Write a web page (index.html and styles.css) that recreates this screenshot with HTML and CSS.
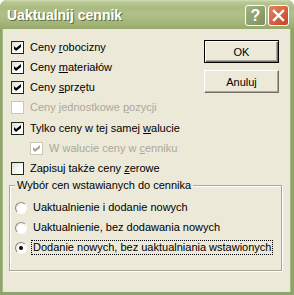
FILE: index.html
```html
<!DOCTYPE html>
<html lang="pl">
<head>
    <meta charset="UTF-8">
    <title>Uaktualnij cennik</title>
    <link rel="stylesheet" href="styles.css">
</head>
<body>
    <div class="window">
        <div class="titlebar">
            <span class="title">Uaktualnij cennik</span>
            <div class="caption-btns">
                <span class="cap-btn help">?</span>
                <span class="cap-btn close">
                    <svg width="13" height="13" viewBox="0 0 13 13">
                        <path d="M2 2 L11 11 M11 2 L2 11" stroke="#fff" stroke-width="2.4" stroke-linecap="square"/>
                    </svg>
                </span>
            </div>
        </div>

        <div class="client">
            <div class="top">
                <!-- pola wyboru -->
                <div class="checks">
                    <label class="check"><span class="box on"></span><span>Ceny <u>r</u>obocizny</span></label>
                    <label class="check"><span class="box on"></span><span>Ceny <u>m</u>ateriałów</span></label>
                    <label class="check"><span class="box on"></span><span>Ceny <u>s</u>przętu</span></label>
                    <label class="check disabled"><span class="box"></span><span>Ceny jednostkowe <u>p</u>ozycji</span></label>
                    <label class="check gap"><span class="box on"></span><span>Tylko ceny w tej samej <u>w</u>alucie</span></label>
                    <label class="check disabled indent"><span class="box on"></span><span>W walucie ceny w <u>c</u>enniku</span></label>
                    <label class="check"><span class="box"></span><span>Zapisuj także ceny <u>z</u>erowe</span></label>
                </div>

                <div class="buttons">
                    <button class="btn default">OK</button>
                    <button class="btn">Anuluj</button>
                </div>
            </div>

            <!-- grupa opcji -->
            <div class="group">
                <span class="group-title">Wybór cen wstawianych do cennika</span>
                <label class="radio"><span class="dot"></span><span class="radio-text">Uaktualnienie i dodanie nowych</span></label>
                <label class="radio"><span class="dot"></span><span class="radio-text">Uaktualnienie, bez dodawania nowych</span></label>
                <label class="radio"><span class="dot on"></span><span class="radio-text focus">Dodanie nowych, bez uaktualniania wstawionych</span></label>
            </div>
        </div>
    </div>
</body>
</html>
```

FILE: styles.css
```css
body {
    margin: 0;
    background: #fff;
    font-family: "Liberation Sans", Arial, sans-serif;
    font-size: 11px;
    color: #000;
}

.window {
    width: 294px;
    height: 295px;
    box-sizing: border-box;
    border-radius: 7px 7px 0 0;
    background: #8FA36C;
    overflow: hidden;
    display: flex;
    flex-direction: column;
}

.titlebar {
    height: 29px;
    flex: none;
    display: flex;
    align-items: center;
    justify-content: space-between;
    padding: 0 5px 0 7px;
    background: linear-gradient(to bottom, #D3DDB6 0px, #B9C893 2px, #AABB81 8px, #B0C08A 14px, #A5B67B 22px, #97AA6D 29px);
}

.title {
    color: #fff;
    font-weight: bold;
    font-size: 14px;
    text-shadow: 1px 1px 0 #5E6E3E;
    padding-top: 1px;
}

.caption-btns {
    display: flex;
    gap: 2px;
    padding-top: 2px;
}

.cap-btn {
    width: 21px;
    height: 21px;
    box-sizing: border-box;
    border: 1px solid #fff;
    border-radius: 3px;
    display: flex;
    align-items: center;
    justify-content: center;
    color: #fff;
}

.help {
    background: linear-gradient(135deg, #A3B383, #7C8F5C);
    font-weight: bold;
    font-size: 16px;
}

.close {
    background: linear-gradient(135deg, #E7835F, #C84126);
}

.client {
    flex: 1;
    margin: 0 4px 3px 3px;
    background: #ECE9D8;
    box-shadow: -1px 0 0 #A6B985, 1px 0 0 #A6B985;
}

.top {
    display: flex;
    justify-content: space-between;
    padding: 11px 11px 0 8px;
}

.checks {
    margin-top: 1px;
}

.check {
    display: flex;
    align-items: center;
    gap: 6px;
    height: 13px;
    margin-bottom: 7px;
    line-height: 13px;
}

.check.gap {
    margin-top: 8px;
}

.check.indent {
    margin-left: 19px;
}

.box {
    width: 13px;
    height: 13px;
    box-sizing: border-box;
    border: 1px solid #1F2A14;
    background: linear-gradient(135deg, #DCDCD4, #fff 70%);
    flex: none;
    position: relative;
}

.box.on::after {
    content: "";
    position: absolute;
    left: 2px;
    top: 2px;
    width: 7px;
    height: 7px;
    background: #000;
    clip-path: polygon(0 29%, 29% 57%, 100% 0, 100% 43%, 29% 100%, 0 71%);
}

.disabled {
    color: #ACA899;
}

.disabled .box {
    border-color: #CAC8BB;
    background: #fff;
}

.disabled .box.on::after {
    background: #ACA899;
}

.buttons {
    display: flex;
    flex-direction: column;
    gap: 7px;
}

.btn {
    width: 75px;
    height: 23px;
    font-family: inherit;
    font-size: 11px;
    background: #ECE9D8;
    border: 1px solid;
    border-color: #fff #716F64 #716F64 #fff;
    box-shadow: inset -1px -1px 0 #ACA899;
    padding: 0;
}

.btn.default {
    border-color: #000;
    box-shadow: inset 1px 1px 0 #fff, inset -1px -1px 0 #716F64, inset -2px -2px 0 #ACA899;
}

.group {
    position: relative;
    margin: 3px 0 0 6px;
    width: 273px;
    height: 86px;
    box-sizing: border-box;
    border: 1px solid #ACA899;
    box-shadow: 1px 1px 0 #fff, inset 1px 1px 0 #fff;
    padding: 15px 0 0 5px;
}

.group-title {
    position: absolute;
    left: 5px;
    top: -7px;
    padding: 0 2px;
    background: #ECE9D8;
    line-height: 13px;
}

.radio {
    display: flex;
    align-items: center;
    gap: 5px;
    height: 13px;
    margin-bottom: 7px;
    line-height: 13px;
}

.dot {
    width: 12px;
    height: 12px;
    box-sizing: border-box;
    border-radius: 50%;
    border: 1px solid;
    border-color: #8E8C80 #fff #fff #8E8C80;
    background: radial-gradient(circle at 60% 60%, #fff 40%, #E2E0D4);
    flex: none;
    position: relative;
}

.dot.on::after {
    content: "";
    position: absolute;
    left: 3px;
    top: 3px;
    width: 4px;
    height: 4px;
    border-radius: 50%;
    background: #000;
}

.radio-text {
    padding: 0 1px;
}

.radio-text.focus {
    outline: 1px dotted #000;
}
```
